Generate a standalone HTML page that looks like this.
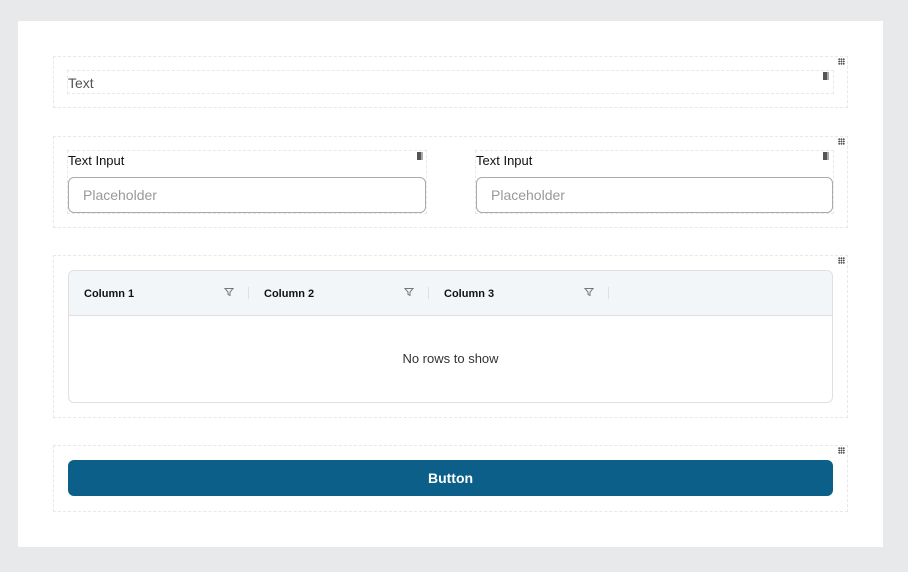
<!DOCTYPE html>
<html><head><style>
*{box-sizing:border-box;margin:0;padding:0}
body{width:908px;height:572px;background:#e8e9eb;font-family:"Liberation Sans",sans-serif;position:relative;overflow:hidden}
.card{position:absolute;left:18px;top:21px;width:865px;height:526px;background:#fff}
.abs{position:absolute}
.dash{border:1px dashed #e6e8eb}
.grip{position:absolute;width:7px;height:7px;background-image:radial-gradient(#444 55%,transparent 60%);background-size:2.33px 2.33px}
.hand{position:absolute;width:6px;height:8px;background:#555;border-right:2px solid #aaa}
.lbl{position:absolute;font-size:13px;color:#111}
.inp{position:absolute;height:36px;border:1px solid #aaa;border-radius:6px;font-size:14px;color:#999;padding:9px 14px}
.col{position:absolute;top:288px;font-size:11px;font-weight:bold;color:#111}
.sep{position:absolute;top:287px;width:1px;height:12px;background:#dde1e6}
</style></head><body>
<div class="card"></div>
<div class="abs dash" style="left:53px;top:56px;width:795px;height:52px"></div>
<div class="abs dash" style="left:67px;top:70px;width:767px;height:24px"></div>
<div class="abs" style="left:68px;top:75px;font-size:14px;color:#555">Text</div>
<div class="grip" style="left:838px;top:58px"></div>
<div class="hand" style="left:823px;top:72px"></div>

<div class="abs dash" style="left:53px;top:136px;width:795px;height:92px"></div>
<div class="abs dash" style="left:67px;top:150px;width:360px;height:64px"></div>
<div class="abs dash" style="left:475px;top:150px;width:359px;height:64px"></div>
<div class="grip" style="left:838px;top:138px"></div>
<div class="hand" style="left:417px;top:152px"></div>
<div class="hand" style="left:823px;top:152px"></div>
<div class="lbl" style="left:68px;top:153px">Text Input</div>
<div class="lbl" style="left:476px;top:153px">Text Input</div>
<div class="inp" style="left:68px;top:177px;width:358px">Placeholder</div>
<div class="inp" style="left:476px;top:177px;width:357px">Placeholder</div>

<div class="abs dash" style="left:53px;top:255px;width:795px;height:163px"></div>
<div class="grip" style="left:838px;top:257px"></div>
<div class="abs" style="left:68px;top:270px;width:765px;height:133px;border:1px solid #dde1e6;border-radius:6px;overflow:hidden">
 <div style="height:45px;background:#f3f6f9;border-bottom:1px solid #dde1e6"></div>
</div>
<div class="col" style="left:84px">Column 1</div>
<div class="col" style="left:264px">Column 2</div>
<div class="col" style="left:444px">Column 3</div>
<svg class="abs" style="left:224px;top:287px" width="10" height="10" viewBox="0 0 10 10"><path d="M1 1.5h8L6 5v3.5L4 7.5V5z" fill="none" stroke="#777" stroke-width="1"/></svg>
<svg class="abs" style="left:404px;top:287px" width="10" height="10" viewBox="0 0 10 10"><path d="M1 1.5h8L6 5v3.5L4 7.5V5z" fill="none" stroke="#777" stroke-width="1"/></svg>
<svg class="abs" style="left:584px;top:287px" width="10" height="10" viewBox="0 0 10 10"><path d="M1 1.5h8L6 5v3.5L4 7.5V5z" fill="none" stroke="#777" stroke-width="1"/></svg>
<div class="sep" style="left:248px"></div><div class="sep" style="left:428px"></div><div class="sep" style="left:608px"></div>
<div class="abs" style="left:68px;top:351px;width:765px;text-align:center;font-size:13px;color:#333">No rows to show</div>

<div class="abs dash" style="left:53px;top:445px;width:795px;height:67px"></div>
<div class="grip" style="left:838px;top:447px"></div>
<div class="abs" style="left:68px;top:460px;width:765px;height:36px;background:#0b5f88;border-radius:6px;color:#fff;font-weight:bold;font-size:14px;text-align:center;line-height:37px">Button</div>
</body></html>
